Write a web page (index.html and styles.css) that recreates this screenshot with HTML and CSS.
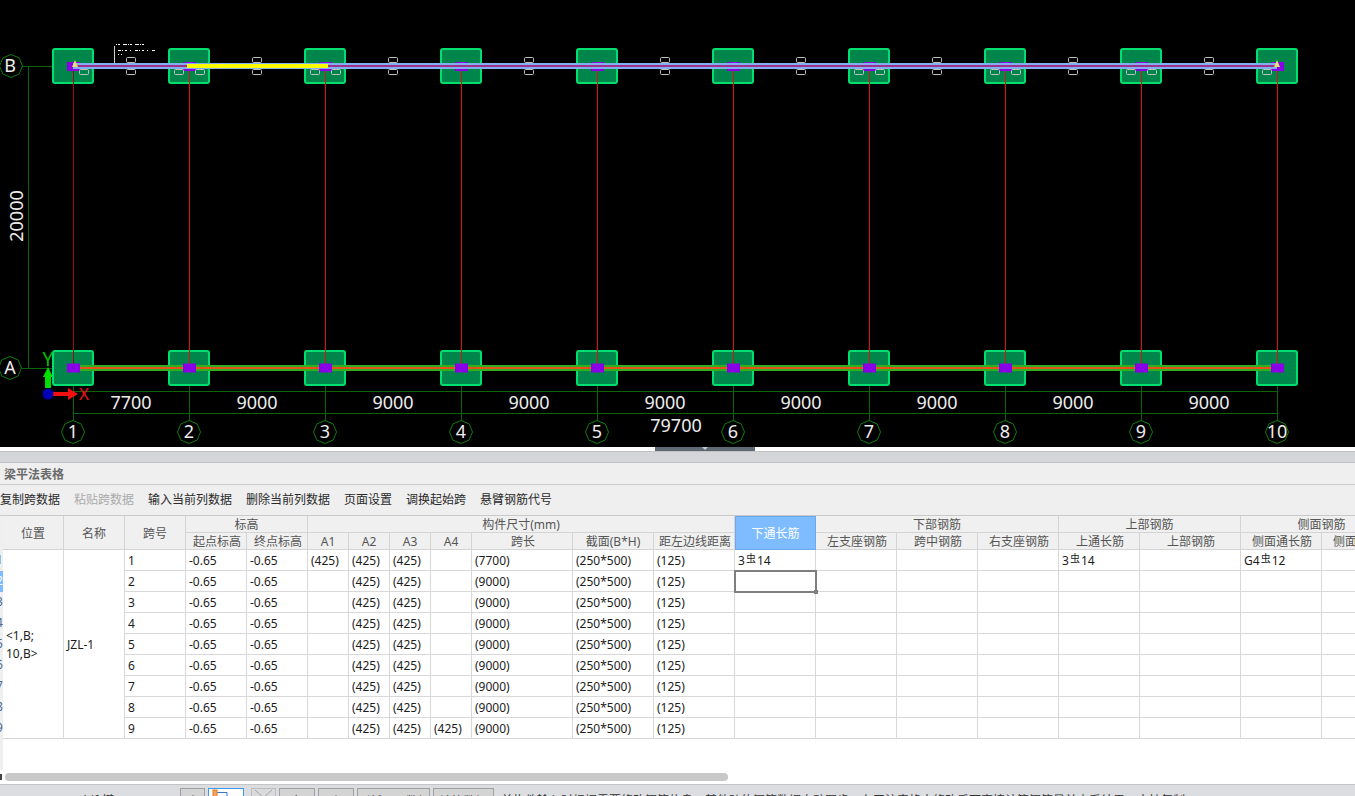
FILE: index.html
```html
<!DOCTYPE html>
<html lang="zh-CN">
<head>
<meta charset="utf-8">
<title>梁平法表格</title>
<link rel="stylesheet" href="styles.css">
</head>
<body>
<div class="app">
  <svg class="cad" width="1355" height="447" viewBox="0 0 1355 447">
    <defs>
      <rect id="box" class="box" x="-20" y="-17" width="40" height="34" rx="2"/>
      <rect id="mark" class="mark" x="-6.5" y="-4.5" width="13" height="9"/>
      <rect id="tag" class="tag" x="0.5" y="0.5" width="9" height="5" rx="1"/>
      <polygon id="bub" class="bubble" points="11.5,0 8.1,8.1 0,11.5 -8.1,8.1 -11.5,0 -8.1,-8.1 0,-11.5 8.1,-8.1"/>
    </defs>

    <path class="dim" d="M22 66.5H73M22 368.5H73M28.500 66V368M73 391.500H1277M73 413.500H1277"/>
    <path class="dim" d="M73.500 372V421M189.500 372V421M325.500 372V421M461.500 372V421M597.500 372V421M733.500 372V421M869.500 372V421M1005.500 372V421M1141.500 372V421M1277.500 372V421"/>

    <g>
      <use href="#box" x="73" y="66"/><use href="#box" x="189" y="66"/><use href="#box" x="325" y="66"/><use href="#box" x="461" y="66"/><use href="#box" x="597" y="66"/><use href="#box" x="733" y="66"/><use href="#box" x="869" y="66"/><use href="#box" x="1005" y="66"/><use href="#box" x="1141" y="66"/><use href="#box" x="1277" y="66"/>
      <use href="#box" x="73" y="368"/><use href="#box" x="189" y="368"/><use href="#box" x="325" y="368"/><use href="#box" x="461" y="368"/><use href="#box" x="597" y="368"/><use href="#box" x="733" y="368"/><use href="#box" x="869" y="368"/><use href="#box" x="1005" y="368"/><use href="#box" x="1141" y="368"/><use href="#box" x="1277" y="368"/>
    </g>

    <path class="axis-first" d="M73.500 66V364"/>
    <path class="axis" d="M189.500 66V364M325.500 66V364M461.500 66V364M597.500 66V364M733.500 66V364M869.500 66V364M1005.500 66V364M1141.500 66V364M1277.500 66V364"/>

    <g>
      <use href="#mark" x="73.500" y="66.500"/><use href="#mark" x="189.500" y="66.500"/><use href="#mark" x="325.500" y="66.500"/><use href="#mark" x="461.500" y="66.500"/><use href="#mark" x="597.500" y="66.500"/><use href="#mark" x="733.500" y="66.500"/><use href="#mark" x="869.500" y="66.500"/><use href="#mark" x="1005.500" y="66.500"/><use href="#mark" x="1141.500" y="66.500"/><use href="#mark" x="1277.500" y="66.500"/>
    </g>

    <rect class="beam-b" x="73" y="63" width="1204" height="6"/>
    <rect class="beam-b-core" x="73" y="65" width="1204" height="2"/>
    <rect class="beam-sel" x="187" y="64" width="141" height="4"/>
    <path class="tip" d="M72 67L75 60L78 67Z"/>
    <path class="tip" d="M1274 67L1277 60L1280 67Z"/>

    <g>
      <use href="#tag" x="126" y="57"/><use href="#tag" x="126" y="69"/>
      <use href="#tag" x="252" y="57"/><use href="#tag" x="252" y="69"/>
      <use href="#tag" x="388" y="57"/><use href="#tag" x="388" y="69"/>
      <use href="#tag" x="524" y="57"/><use href="#tag" x="524" y="69"/>
      <use href="#tag" x="660" y="57"/><use href="#tag" x="660" y="69"/>
      <use href="#tag" x="796" y="57"/><use href="#tag" x="796" y="69"/>
      <use href="#tag" x="932" y="57"/><use href="#tag" x="932" y="69"/>
      <use href="#tag" x="1068" y="57"/><use href="#tag" x="1068" y="69"/>
      <use href="#tag" x="1204" y="57"/><use href="#tag" x="1204" y="69"/>
      <use href="#tag" x="79" y="69"/>
      <use href="#tag" x="174" y="69"/><use href="#tag" x="195" y="69"/>
      <use href="#tag" x="310" y="69"/><use href="#tag" x="331" y="69"/>
      <use href="#tag" x="854" y="69"/><use href="#tag" x="875" y="69"/>
      <use href="#tag" x="990" y="69"/><use href="#tag" x="1011" y="69"/>
      <use href="#tag" x="1126" y="69"/><use href="#tag" x="1147" y="69"/>
      <use href="#tag" x="1262" y="69"/>
    </g>

    <path class="note-bar" d="M114.500 46V63"/>
    <path class="note-a" d="M116 44.500H144"/>
    <path class="note-b" d="M118 50.500H155"/>
    <path class="note-c" d="M118 54.500H124"/>

    <rect class="beam-a" x="73" y="365" width="1204" height="6"/>
    <rect class="beam-a-core" x="73" y="367" width="1204" height="2"/>
    <g>
      <use href="#mark" x="73.500" y="368"/><use href="#mark" x="189.500" y="368"/><use href="#mark" x="325.500" y="368"/><use href="#mark" x="461.500" y="368"/><use href="#mark" x="597.500" y="368"/><use href="#mark" x="733.500" y="368"/><use href="#mark" x="869.500" y="368"/><use href="#mark" x="1005.500" y="368"/><use href="#mark" x="1141.500" y="368"/><use href="#mark" x="1277.500" y="368"/>
    </g>

    <use href="#bub" x="11" y="66"/><use href="#bub" x="10" y="368"/>
    <use href="#bub" x="73" y="432"/><use href="#bub" x="189" y="432"/><use href="#bub" x="325" y="432"/><use href="#bub" x="461" y="432"/><use href="#bub" x="597" y="432"/><use href="#bub" x="733" y="432"/><use href="#bub" x="869" y="432"/><use href="#bub" x="1005" y="432"/><use href="#bub" x="1141" y="432"/><use href="#bub" x="1277" y="432"/>

    <g class="label">
      <text x="10" y="72">B</text><text x="10" y="374">A</text>
      <text x="73" y="438">1</text><text x="189" y="438">2</text><text x="325" y="438">3</text><text x="461" y="438">4</text><text x="597" y="438">5</text><text x="733" y="438">6</text><text x="869" y="438">7</text><text x="1005" y="438">8</text><text x="1141" y="438">9</text><text x="1277" y="438">10</text>
      <text x="131" y="409">7700</text><text x="257" y="409">9000</text><text x="393" y="409">9000</text><text x="529" y="409">9000</text><text x="665" y="409">9000</text><text x="801" y="409">9000</text><text x="937" y="409">9000</text><text x="1073" y="409">9000</text><text x="1209" y="409">9000</text>
      <text x="676" y="432">79700</text>
      <text class="vert" x="23" y="216" transform="rotate(-90 23 216)">20000</text>
    </g>

    <path class="ucs-y" d="M45 388V377H43L48 367L53 377H51V388Z"/>
    <path class="ucs-x" d="M53 392H68V388L78 394L68 400V396H53Z"/>
    <circle class="ucs-o" cx="48" cy="394" r="5.500"/>
    <text class="ucs-tx" x="84" y="400">X</text>
    <text class="ucs-ty" x="48" y="366">Y</text>
  </svg>

  <div class="split"><div class="split-handle"></div></div>
  <div class="band"></div>
  <div class="title">梁平法表格</div>
  <div class="toolbar">
    <span>复制跨数据</span>
    <span class="off">粘贴跨数据</span>
    <span>输入当前列数据</span>
    <span>删除当前列数据</span>
    <span>页面设置</span>
    <span>调换起始跨</span>
    <span>悬臂钢筋代号</span>
  </div>

  <div class="grid">
    <div class="gutter">
      <div class="gnum">1</div>
      <div class="gnum on">2</div>
      <div class="gnum">3</div>
      <div class="gnum">4</div>
      <div class="gnum">5</div>
      <div class="gnum">6</div>
      <div class="gnum">7</div>
      <div class="gnum">8</div>
      <div class="gnum">9</div>
    </div>
    <table class="sheet">
      <colgroup>
        <col class="w61"><col class="w61"><col class="w61"><col class="w61"><col class="w61">
        <col class="w41"><col class="w41"><col class="w41"><col class="w41">
        <col class="w101"><col class="w81"><col class="w81">
        <col class="w81"><col class="w81"><col class="w81"><col class="w81">
        <col class="w81"><col class="w101"><col class="w81"><col class="w81">
      </colgroup>
      <thead>
        <tr>
          <th rowspan="2">位置</th><th rowspan="2">名称</th><th rowspan="2">跨号</th>
          <th colspan="2">标高</th>
          <th colspan="7">构件尺寸(mm)</th>
          <th rowspan="2" class="picked">下通长筋</th>
          <th colspan="3">下部钢筋</th>
          <th colspan="2">上部钢筋</th>
          <th colspan="2">侧面钢筋</th>
        </tr>
        <tr class="sub">
          <th>起点标高</th><th>终点标高</th>
          <th class="latin">A1</th><th class="latin">A2</th><th class="latin">A3</th><th class="latin">A4</th><th>跨长</th><th class="latin">截面(B*H)</th><th>距左边线距离</th>
          <th>左支座钢筋</th><th>跨中钢筋</th><th>右支座钢筋</th>
          <th>上通长筋</th><th>上部钢筋</th>
          <th>侧面通长筋</th><th>侧面纵向筋</th>
        </tr>
      </thead>
      <tbody>
        <tr>
          <td rowspan="9" class="multi">&lt;1,B;<br>10,B&gt;</td><td rowspan="9">JZL-1</td>
          <td>1</td><td>-0.65</td><td>-0.65</td><td>(425)</td><td>(425)</td><td>(425)</td><td></td><td>(7700)</td><td>(250*500)</td><td>(125)</td>
          <td>3<span class="sym">虫</span>14</td><td></td><td></td><td></td><td>3<span class="sym">虫</span>14</td><td></td><td>G4<span class="sym">虫</span>12</td><td></td>
        </tr>
        <tr><td>2</td><td>-0.65</td><td>-0.65</td><td></td><td>(425)</td><td>(425)</td><td></td><td>(9000)</td><td>(250*500)</td><td>(125)</td><td class="cursor"></td><td></td><td></td><td></td><td></td><td></td><td></td><td></td></tr>
        <tr><td>3</td><td>-0.65</td><td>-0.65</td><td></td><td>(425)</td><td>(425)</td><td></td><td>(9000)</td><td>(250*500)</td><td>(125)</td><td></td><td></td><td></td><td></td><td></td><td></td><td></td><td></td></tr>
        <tr><td>4</td><td>-0.65</td><td>-0.65</td><td></td><td>(425)</td><td>(425)</td><td></td><td>(9000)</td><td>(250*500)</td><td>(125)</td><td></td><td></td><td></td><td></td><td></td><td></td><td></td><td></td></tr>
        <tr><td>5</td><td>-0.65</td><td>-0.65</td><td></td><td>(425)</td><td>(425)</td><td></td><td>(9000)</td><td>(250*500)</td><td>(125)</td><td></td><td></td><td></td><td></td><td></td><td></td><td></td><td></td></tr>
        <tr><td>6</td><td>-0.65</td><td>-0.65</td><td></td><td>(425)</td><td>(425)</td><td></td><td>(9000)</td><td>(250*500)</td><td>(125)</td><td></td><td></td><td></td><td></td><td></td><td></td><td></td><td></td></tr>
        <tr><td>7</td><td>-0.65</td><td>-0.65</td><td></td><td>(425)</td><td>(425)</td><td></td><td>(9000)</td><td>(250*500)</td><td>(125)</td><td></td><td></td><td></td><td></td><td></td><td></td><td></td><td></td></tr>
        <tr><td>8</td><td>-0.65</td><td>-0.65</td><td></td><td>(425)</td><td>(425)</td><td></td><td>(9000)</td><td>(250*500)</td><td>(125)</td><td></td><td></td><td></td><td></td><td></td><td></td><td></td><td></td></tr>
        <tr><td>9</td><td>-0.65</td><td>-0.65</td><td></td><td>(425)</td><td>(425)</td><td>(425)</td><td>(9000)</td><td>(250*500)</td><td>(125)</td><td></td><td></td><td></td><td></td><td></td><td></td><td></td><td></td></tr>
      </tbody>
    </table>
  </div>

  <div class="hscroll"><div class="harrow"></div><div class="hthumb"></div></div>

  <div class="status">
    <span class="hint">Shift键</span>
    <div class="btn b25"><svg width="23" height="8"><path class="ic" d="M12 6V8"/></svg></div>
    <div class="btn b35 active"><svg width="33" height="8"><rect class="ic-o" x="4" y="1" width="4" height="7"/><path class="ic-b" d="M8 3.500H18V8"/></svg></div>
    <div class="btn b25 dis"><svg width="23" height="8"><path class="ic-d" d="M3 1L11 8M20 1L12 8"/></svg></div>
    <div class="btn b36"><svg width="34" height="8"><path class="ic" d="M14 8L17 6"/></svg></div>
    <div class="btn b36"><svg width="34" height="8"><path class="ic" d="M17 6V8"/></svg></div>
    <div class="btn b73">刷新页面数据</div>
    <div class="btn b61">计算数据</div>
    <span class="msg">单构件输入时根据需要修改钢筋信息，其他跨的钢筋数据自动同步，在平法表格中修改后可直接计算钢筋量并查看结果，支持复制</span>
  </div>
</div>
</body>
</html>
```
FILE: styles.css
```css
* { box-sizing: border-box; }
html, body { margin: 0; padding: 0; }
body {
  width: 1355px;
  height: 796px;
  overflow: hidden;
  background: #fff;
  font-family: "Noto Sans", "Noto Sans CJK SC", sans-serif;
  font-size: 12px;
  color: #333;
}
.app { display: flex; flex-direction: column; width: 1355px; height: 796px; overflow: hidden; }

/* CAD canvas */
.cad { display: block; flex: none; background: #000; }
.box { fill: #00864a; stroke: #00e070; stroke-width: 2; }
.mark { fill: #8a00e6; }
.dim { fill: none; stroke: #0a640a; stroke-width: 1; }
.axis { fill: none; stroke: #d81414; stroke-width: 1; }
.axis-first { fill: none; stroke: #a00a14; stroke-width: 1; }
.beam-b { fill: #80b0f0; }
.beam-b-core { fill: #a0308e; }
.beam-sel { fill: #ffff00; }
.tip { fill: #e8e070; }
.tag { fill: none; stroke: #c0c0c0; stroke-width: 1; }
.note-bar { stroke: #cfcfcf; stroke-width: 1; fill: none; }
.note-a { stroke: #fff; stroke-dasharray: 1 1 2 3 4 1; fill: none; }
.note-b { stroke: #fff; stroke-dasharray: 3 1 1 2 2 3 1 4; fill: none; }
.note-c { stroke: #fff; stroke-dasharray: 1 2; fill: none; }
.beam-a { fill: #30b020; }
.beam-a-core { fill: #e8501c; }
.bubble { fill: none; stroke: #0f7a0f; stroke-width: 1; }
.label text {
  font-family: "Noto Sans", sans-serif;
  font-size: 18px;
  fill: #eee;
  text-anchor: middle;
}
.ucs-y { fill: #00e000; }
.ucs-x { fill: #f01010; }
.ucs-o { fill: #0000b4; }
.ucs-tx, .ucs-ty { font-family: "Noto Sans", sans-serif; text-anchor: middle; }
.ucs-tx { fill: #f01010; font-size: 17px; }
.ucs-ty { fill: #00c000; font-size: 19px; }

/* Splitter and panel header */
.split { flex: none; height: 4px; padding-left: 655px; background: #fff; }
.split-handle { width: 100px; height: 4px; background: #5f6a76; position: relative; }
.split-handle::after {
  content: "";
  position: absolute;
  left: 47px;
  top: 0;
  border: 3px solid transparent;
  border-top-color: #c5c8cc;
}
.band { flex: none; height: 12px; background: #d4d5d9; border-top: 1px solid #c2c2c6; border-bottom: 1px solid #c2c2c6; }
.title {
  flex: none;
  height: 22px;
  padding: 1px 0 0 4px;
  line-height: 21px;
  background: #efefef;
  border-bottom: 1px solid #c9c9c9;
  color: #6a6a6a;
  font-weight: 700;
}
.toolbar {
  flex: none;
  height: 31px;
  display: flex;
  align-items: center;
  gap: 14px;
  padding-bottom: 2px;
  background: #efefef;
  border-bottom: 1px solid #c9c9c9;
  color: #2a2a2a;
}
.toolbar .off { color: #aaa; }

/* Sheet */
.grid { flex: none; height: 257px; display: flex; overflow: hidden; background: #fff; }
.gutter { flex: none; width: 3px; height: 254px; padding-top: 34px; background: #efefef; overflow: hidden; }
.gnum { height: 21px; line-height: 20px; margin-left: -4px; color: #4a6a96; overflow: hidden; }
.gnum.on { margin-left: 0; padding-left: 0; background: #7ebcff; color: #fff; text-indent: -4px; }
.sheet {
  flex: none;
  width: 1400px;
  table-layout: fixed;
  border-collapse: separate;
  border-spacing: 0;
  align-self: flex-start;
}
.w41 { width: 41px; }
.w61 { width: 61px; }
.w81 { width: 81px; }
.w101 { width: 101px; }
.sheet th {
  height: 17px;
  padding: 1px 0 0;
  line-height: 15px;
  font-weight: 400;
  color: #555;
  background: #f0f0f0;
  border-right: 1px solid #d4d4d4;
  border-bottom: 1px solid #d4d4d4;
  white-space: nowrap;
  overflow: hidden;
}
.sheet .sub th { padding-left: 2px; }
.sheet .sub th.latin { padding-left: 0; }
.sheet th.picked { background: #7ebcff; color: #fff; border: 1px solid #6ea8e8; }
.sheet td {
  height: 21px;
  padding: 1px 0 0 3px;
  line-height: 19px;
  color: #1c1c1c;
  background: #fff;
  border-right: 1px solid #d8d8d8;
  border-bottom: 1px solid #d8d8d8;
  white-space: nowrap;
  overflow: hidden;
}
.sheet td.multi { line-height: 18px; white-space: normal; }
.sym { font-size: 10px; line-height: 0; vertical-align: 3px; margin: 0 1px; font-family: "Noto Sans CJK SC", sans-serif; }
.sheet td.cursor { position: relative; overflow: visible; outline: 2px solid #7f7f7f; outline-offset: -1px; }
.cursor::after {
  content: "";
  position: absolute;
  right: -3px;
  bottom: -3px;
  width: 4px;
  height: 4px;
  background: #7f7f7f;
}

/* Scrollbar */
.hscroll { flex: none; height: 8px; display: flex; align-items: center; background: #fff; }
.harrow { width: 2px; height: 6px; background: #444; }
.hthumb { width: 723px; height: 8px; margin-left: 3px; background: #c8c8c8; border-radius: 4px; }

/* Status bar */
.status {
  flex: none;
  height: 12px;
  margin-top: 3px;
  display: flex;
  align-items: flex-start;
  gap: 3px;
  padding-top: 3px;
  background: #dcdde0;
  border-top: 1px solid #c5c5c5;
  overflow: hidden;
  white-space: nowrap;
  color: #333;
}
.hint { width: 177px; flex: none; padding: 5px 0 0 77px; line-height: 16px; }
.btn { flex: none; height: 24px; background: #d4d4d4; border: 1px solid #a0a0a0; text-align: center; line-height: 16px; padding-top: 5px; }
.btn svg { display: block; margin-top: -5px; }
.b25 { width: 25px; }
.b35 { width: 36px; }
.b36 { width: 36px; }
.b73 { width: 73px; }
.b61 { width: 61px; }
.active { background: #fff; border-color: #3a98f0; }
.dis { margin-left: 4px; background: #dadadc; border-color: #bdbdbd; }
.ic { stroke: #666; fill: none; }
.ic-d { stroke: #a8a8a8; fill: none; }
.ic-o { fill: #f4a460; stroke: #e07820; }
.ic-b { stroke: #3a78c8; fill: none; }
.msg { flex: none; margin-left: 4px; line-height: 16px; padding-top: 5px; }
```
